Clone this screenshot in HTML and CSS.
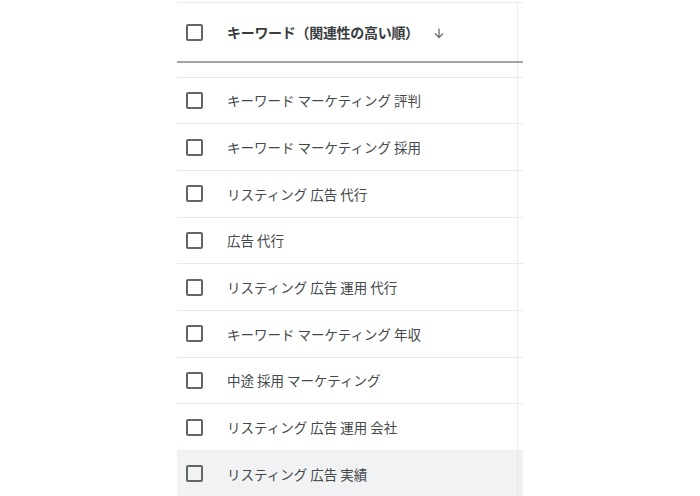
FILE: index.html
```html
<!DOCTYPE html>
<html lang="ja">
<head>
<meta charset="utf-8">
<link rel="stylesheet" href="styles.css">
</head>
<body>
<div class="table">
  <div class="topline"></div>
  <div class="head">
    <div class="cell">
      <span class="cb"></span>
      <span class="htext">キーワード（関連性の高い順）</span>
      <svg class="arrow" width="12" height="12" viewBox="0 0 12 12"><path d="M6 1.5V10.5M2 6.5L6 10.5L10 6.5" fill="none" stroke="#6b6f73" stroke-width="1.3"/></svg>
    </div>
    <div class="side"></div>
  </div>
  <div class="gap"><div class="cell"></div><div class="side"></div></div>
  <div class="row"><div class="cell"><span class="cb"></span><span class="text">キーワード マーケティング 評判</span></div><div class="side"></div></div>
  <div class="row"><div class="cell"><span class="cb"></span><span class="text">キーワード マーケティング 採用</span></div><div class="side"></div></div>
  <div class="row"><div class="cell"><span class="cb"></span><span class="text">リスティング 広告 代行</span></div><div class="side"></div></div>
  <div class="row"><div class="cell"><span class="cb"></span><span class="text">広告 代行</span></div><div class="side"></div></div>
  <div class="row"><div class="cell"><span class="cb"></span><span class="text">リスティング 広告 運用 代行</span></div><div class="side"></div></div>
  <div class="row"><div class="cell"><span class="cb"></span><span class="text">キーワード マーケティング 年収</span></div><div class="side"></div></div>
  <div class="row"><div class="cell"><span class="cb"></span><span class="text">中途 採用 マーケティング</span></div><div class="side"></div></div>
  <div class="row"><div class="cell"><span class="cb"></span><span class="text">リスティング 広告 運用 会社</span></div><div class="side"></div></div>
  <div class="row hover"><div class="cell"><span class="cb"></span><span class="text">リスティング 広告 実績</span></div><div class="side"></div></div>
</div>
</body>
</html>
```
FILE: styles.css
```css
* { box-sizing: border-box; }
html, body { margin: 0; padding: 0; background: #ffffff; }
body {
  font-family: "Noto Sans CJK JP", "Noto Sans", sans-serif;
  overflow: hidden;
  height: 496px;
}
.table {
  margin-left: 177px;
  width: 346px;
  display: flex;
  flex-direction: column;
}
.topline {
  height: 3px;
  border-bottom: 1px solid #ececec;
}
.head, .gap, .row {
  display: flex;
}
.cell {
  width: 341px;
  display: flex;
  align-items: center;
  padding-left: 9px;
  border-right: 1px solid #ebebeb;
}
.side { flex: 1; }
.head {
  height: 60px;
  border-bottom: 2px solid #a2a4a6;
}
.gap {
  height: 13.5px;
}
.row {
  height: 46.7px;
  flex: none;
  border-top: 1px solid #e9eaeb;
}
.row.hover { background: #f1f2f4; }
.cb {
  width: 17px;
  height: 17px;
  border: 2px solid #636669;
  border-radius: 2px;
  flex: none;
}
.htext {
  margin-left: 24px;
  font-size: 14px;
  font-weight: 700;
  color: #3a3d40;
  letter-spacing: -0.3px;
}
.arrow {
  margin-left: 14px;
  margin-top: 2px;
}
.text {
  margin-left: 24px;
  font-size: 13.5px;
  color: #45484b;
}
```
